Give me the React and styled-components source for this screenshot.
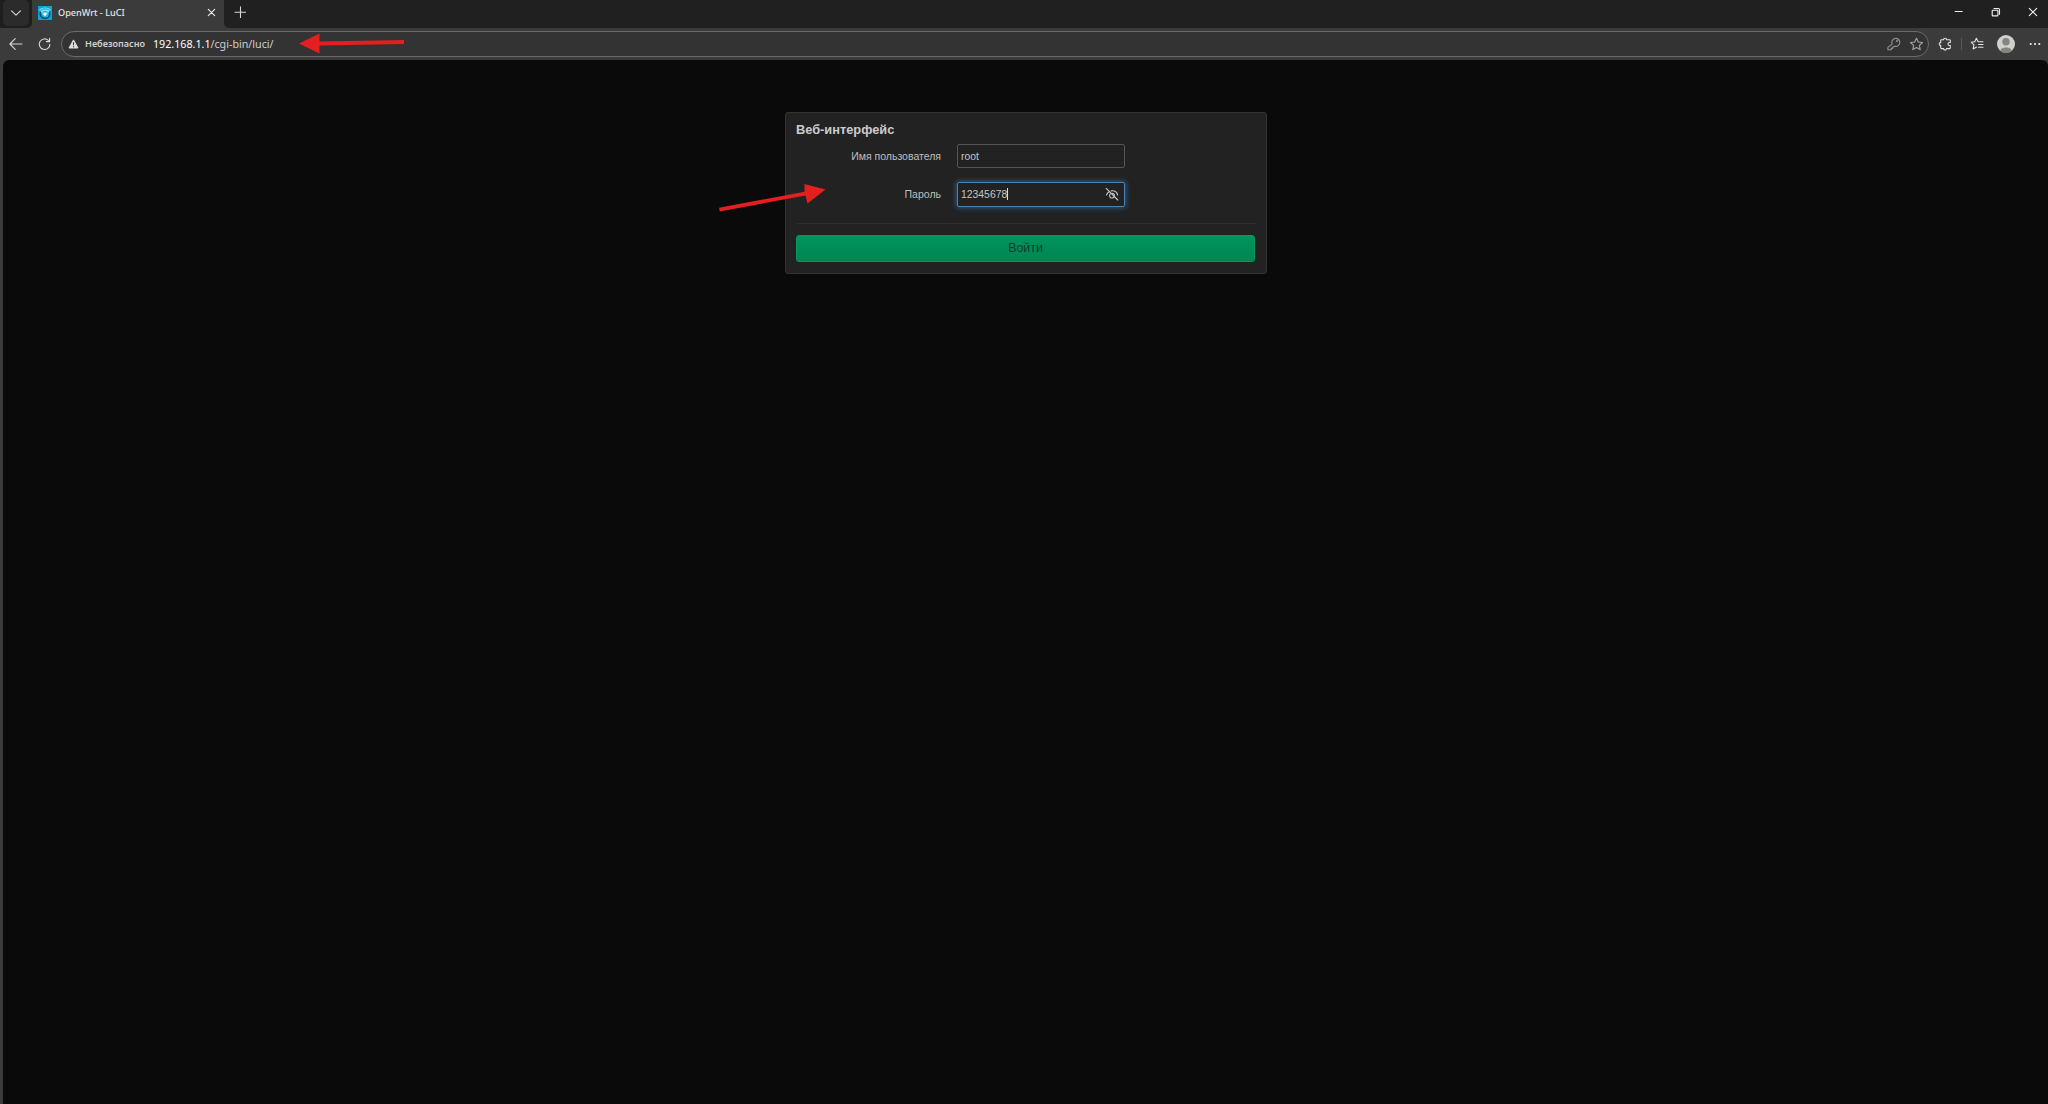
import React from "react";
import styled, { createGlobalStyle, css } from "styled-components";

const GlobalStyle = createGlobalStyle`
  * {
    box-sizing: border-box;
  }

  body {
    margin: 0;
    background: #0a0a0a;
    overflow: hidden;
  }
`;

const Window = styled.div`
  position: relative;
  display: flex;
  flex-direction: column;
  width: 100vw;
  height: 100vh;
  background-color: #3b3b3b;
  font-family: "Noto Sans", "Open Sans", sans-serif;
  color: #e6e6e6;

  svg {
    display: block;
    flex: none;
  }
`;

const TabStrip = styled.div`
  display: flex;
  height: 28px;
  background-color: #3b3b3b;
`;

const StripStart = styled.div`
  width: 32px;
  padding-left: 3px;
  background-color: #1e1e1e;
  border-bottom-right-radius: 5px;
`;

const StripEnd = styled.div`
  display: flex;
  flex: 1;
  justify-content: space-between;
  padding: 6px 9px 0 10px;
  background-color: #202020;
  border-bottom-left-radius: 5px;
`;

const TabSearch = styled.div`
  display: flex;
  align-items: center;
  justify-content: center;
  width: 26px;
  height: 26px;
  background-color: #2b2b2b;
  border-radius: 5px;
`;

const Tab = styled.div`
  display: flex;
  align-items: center;
  width: 192px;
  padding: 0 8px 3px 6px;
`;

const TabTitle = styled.span`
  flex: 1;
  margin-left: 6px;
  font-size: 9.1px;
  font-weight: 500;
  line-height: 14px;
  white-space: nowrap;
`;

const WindowButtons = styled.div`
  display: flex;
  gap: 25px;
`;

const Toolbar = styled.div`
  display: flex;
  align-items: center;
  height: 32px;
  padding: 0 6px 0 8px;
`;

const NavButtons = styled.div`
  display: flex;
  gap: 14px;
  width: 53px;
`;

const AddressBar = styled.div`
  display: flex;
  align-items: center;
  width: 1868px;
  height: 26px;
  padding: 0 4px 0 6px;
  background-color: #333333;
  border: 1px solid #6a6a6a;
  border-radius: 13px;
`;

const Warning = styled.span`
  width: 68px;
  margin-left: 6px;
  padding-bottom: 1px;
  font-size: 9.1px;
  font-weight: 600;
  color: #d0d0d0;
  white-space: nowrap;
`;

const Address = styled.span`
  flex: 1;
  padding-bottom: 1px;
  font-size: 10.7px;
  color: #cfcfcf;

  b {
    font-weight: 400;
    color: #ffffff;
  }
`;

const AddressIcons = styled.div`
  display: flex;
  gap: 8px;
`;

const ToolbarIcons = styled.div`
  display: flex;
  flex: 1;
  align-items: center;
  padding-left: 9px;
`;

const Divider = styled.div`
  width: 1px;
  height: 12px;
  margin: 0 8px 0 9px;
  background-color: #575757;
`;

const Avatar = styled.div`
  margin: 0 14px 0 13px;
`;

const Page = styled.main`
  flex: 1;
  margin-left: 3px;
  padding-top: 52px;
  background-color: #0a0a0a;
  border-radius: 6px 6px 0 0;
  font-family: "Liberation Sans", Arial, sans-serif;
`;

const LoginCard = styled.form`
  width: 482px;
  height: 162px;
  margin-left: 782px;
  padding: 10px 10px 0;
  background-color: #222222;
  border: 1px solid #333333;
  border-radius: 3px;
`;

const Title = styled.h3`
  height: 21px;
  margin: 0;
  font-size: 12.8px;
  line-height: 14px;
  color: #cccccc;
`;

const Field = styled.label`
  display: flex;
  align-items: center;
  height: 24px;
  margin-bottom: 14px;
`;

const FieldName = styled.span`
  width: 145px;
  margin-right: 16px;
  padding-bottom: 1px;
  font-size: 10.5px;
  text-align: right;
  color: #bfbfbf;
`;

const InputBox = styled.span`
  display: flex;
  align-items: center;
  width: 168px;
  height: 24px;
  padding: 0 5px 0 3px;
  border: 1px solid #555555;
  border-radius: 2px;
  font-size: 10.4px;
  color: #c4c4c4;

  ${(props) =>
    props.$focused &&
    css`
      height: 25px;
      border-color: #4683b3;
      box-shadow: 0 0 5px 1px rgba(45, 125, 190, 0.65);
    `}
`;

const Caret = styled.i`
  width: 1px;
  height: 12px;
  margin-right: auto;
  background-color: #dddddd;
`;

const Rule = styled.div`
  height: 1px;
  margin: 17px 0 11px;
  background-color: #2e2e2e;
`;

const Submit = styled.button`
  display: block;
  width: 459px;
  height: 27px;
  padding: 0 0 1px;
  background: linear-gradient(#00945f, #00854f);
  border: 1px solid #08975f;
  border-radius: 3px;
  font-family: inherit;
  font-size: 12.4px;
  color: #143c2b;
`;

const Arrows = styled.svg`
  position: absolute;
  top: 0;
  left: 0;
  pointer-events: none;
`;

function Icon({ width = 14, height = 14, color = "#d8d8d8", children }) {
  return (
    <svg
      width={width}
      height={height}
      viewBox={`0 0 ${width} ${height}`}
      fill="none"
      stroke={color}
      strokeWidth="1.1"
      strokeLinecap="round"
      strokeLinejoin="round"
    >
      {children}
    </svg>
  );
}

function Favicon() {
  return (
    <svg width="14" height="14" viewBox="0 0 14 14">
      <rect width="14" height="14" fill="#08a5d8" />
      <circle cx="7" cy="7.7" r="4.700" fill="#27b9e4" stroke="#07516f" strokeWidth="1.700" />
      <path d="M1 3.800C4.200 .6 9.800 .6 13 3.800L7 10.200z" fill="#7edcf6" />
      <path d="M2.400 4.500C5 2.300 9 2.300 11.600 4.500M4.400 6.500c1.500-1.300 3.700-1.300 5.200 0" fill="none" stroke="#1499c4" strokeWidth=".9" />
      <circle cx="7" cy="8.300" r="1.400" fill="#ffffff" />
    </svg>
  );
}

function TitleBar() {
  return (
    <TabStrip>
      <StripStart>
        <TabSearch>
          <Icon width={12} height={8}>
            <path d="M1.500 1.800 6 6.100 10.500 1.800" />
          </Icon>
        </TabSearch>
      </StripStart>
      <Tab>
        <Favicon />
        <TabTitle>OpenWrt - LuCI</TabTitle>
        <Icon width={9} height={9} color="#eeeeee">
          <path d="M1.300 1.300l6.400 6.400M7.700 1.300 1.300 7.700" />
        </Icon>
      </Tab>
      <StripEnd>
        <Icon width={12} height={12}>
          <path d="M6.500 .8v10.800M1 6.200h10.800" />
        </Icon>
        <WindowButtons>
          <Icon width={12} height={12} color="#f2f2f2">
            <path d="M2.200 5.500h7" />
          </Icon>
          <Icon width={12} height={12} color="#f2f2f2">
            <path d="M4 2.500h4.300A1.200 1.200 0 0 1 9.500 3.700V8.300M2.900 4.200h4.300q.7 0 .7.700v4.300q0 .7-.7.700H2.900q-.7 0-.7-.7V4.900q0-.7.700-.7z" />
          </Icon>
          <Icon width={12} height={12} color="#f2f2f2">
            <path d="M2.300 2.300l7.400 7.400M9.700 2.300 2.300 9.700" />
          </Icon>
        </WindowButtons>
      </StripEnd>
    </TabStrip>
  );
}

function NavigationBar() {
  return (
    <Toolbar>
      <NavButtons>
        <Icon width={15}>
          <path d="M7.200 1.700 1.900 7l5.300 5.300M1.900 7h12" />
        </Icon>
        <Icon width={15}>
          <path d="M12.900 7.200A5.300 5.300 0 1 1 11.300 3.400l1.300 1.200M12.600 1.300v3.300H9.300" />
        </Icon>
      </NavButtons>
      <AddressBar>
        <svg width="11" height="10" viewBox="0 0 11 10">
          <path d="M5.500 .9 10 9H1z" fill="#dedede" stroke="#dedede" strokeLinejoin="round" />
          <path d="M5.500 3.300v3M5.500 7.200v1.100" stroke="#333333" strokeWidth="1" />
        </svg>
        <Warning>Небезопасно</Warning>
        <Address>
          <b>192.168.1.1</b>/cgi-bin/luci/
        </Address>
        <AddressIcons>
          <Icon color="#929292">
            <path d="M5.200 7.100A4 4 0 1 1 7.700 9.200L6.800 10H5.600v1.400H4.200v1.400H.9v-2.400z" />
            <circle cx="10" cy="4" r=".5" />
          </Icon>
          <Icon width={15} color="#a5a5a5">
            <path d="M7.500 1.200 9.300 5l4.200.5-3.100 2.900.8 4.200-3.700-2.100-3.700 2.100.8-4.200L1.500 5.500 5.700 5z" />
          </Icon>
        </AddressIcons>
      </AddressBar>
      <ToolbarIcons>
        <Icon color="#e4e4e4">
          <path d="M3.500 2.700H5.600a1.500 1.500 0 0 1 3 0H11.500q.8 0 .8.800V5.500H11.500a1.500 1.500 0 0 0 0 3H12.300V10.800q0 .8-.8.800H8.600a1.500 1.500 0 0 1-3 0H3.500q-.8 0-.8-.8V8.600a1.500 1.500 0 0 1 0-3V3.500q0-.8.800-.8z" />
        </Icon>
        <Divider />
        <Icon color="#e4e4e4">
          <path d="M8 4.500 6.400 1.300 4.800 4.700 1.200 5.200l2.700 2.700-.7 4 3.400-1.900M8.300 4.700H13M8.600 7.500H13M8.600 10.300H13" />
        </Icon>
        <Avatar>
          <svg width="18" height="18" viewBox="0 0 18 18">
            <circle cx="9" cy="9" r="9" fill="#d0d0cc" />
            <circle cx="9" cy="6.700" r="3.700" fill="#85857f" />
            <path d="M3.500 16.100C2.500 11.200 15.500 11.200 14.500 16.100A9 9 0 0 1 3.500 16.100z" fill="#85857f" />
          </svg>
        </Avatar>
        <Icon width={12}>
          <g fill="#ececec" stroke="none">
            <circle cx="1.700" cy="7" r="1.100" />
            <circle cx="6" cy="7" r="1.100" />
            <circle cx="10.300" cy="7" r="1.100" />
          </g>
        </Icon>
      </ToolbarIcons>
    </Toolbar>
  );
}

function LoginForm() {
  return (
    <LoginCard>
      <Title>Веб-интерфейс</Title>
      <Field>
        <FieldName>Имя пользователя</FieldName>
        <InputBox>root</InputBox>
      </Field>
      <Field>
        <FieldName>Пароль</FieldName>
        <InputBox $focused>
          12345678
          <Caret />
          <Icon color="#c8c8c8">
            <path d="M1.200 1.400l11.600 11.600M1.500 8C2.100 6.400 3.100 5.200 4.500 4.500M6.200 3.900C9.400 3.400 11.900 5.100 12.700 8M5.700 6.600a2.400 2.400 0 1 0 3.300 3.300M7.500 6.200A2.400 2.400 0 0 1 9.500 8.200" />
          </Icon>
        </InputBox>
      </Field>
      <Rule />
      <Submit type="button">Войти</Submit>
    </LoginCard>
  );
}

function App() {
  return (
    <Window>
      <GlobalStyle />
      <TitleBar />
      <NavigationBar />
      <Page>
        <LoginForm />
      </Page>
      <Arrows width="840" height="230" viewBox="0 0 840 230" fill="#e3201f">
        <path d="M299 43.500 319.500 33.500V41.600L404 40V44L319.500 45.600V53.500z" />
        <path d="M825.500 189.500 804.500 184V191.800L719 207.700 719.800 211.500 805.500 195.500 807.500 203.500z" />
      </Arrows>
    </Window>
  );
}

export default App;
